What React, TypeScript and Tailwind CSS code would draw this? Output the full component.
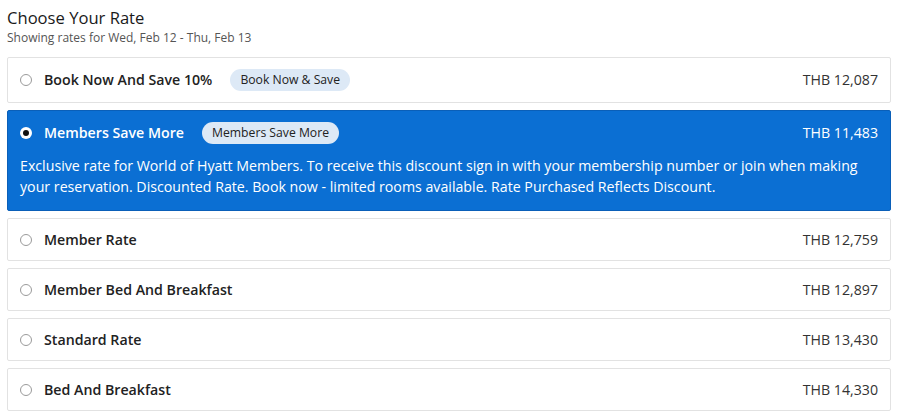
import React from "react";

type Rate = { name: string; price: string; badge?: string; selected?: boolean; desc?: string };

const rates: Rate[] = [
  { name: "Book Now And Save 10%", price: "THB 12,087", badge: "Book Now & Save" },
  {
    name: "Members Save More",
    price: "THB 11,483",
    badge: "Members Save More",
    selected: true,
    desc: "Exclusive rate for World of Hyatt Members. To receive this discount sign in with your membership number or join when making your reservation. Discounted Rate. Book now - limited rooms available. Rate Purchased Reflects Discount.",
  },
  { name: "Member Rate", price: "THB 12,759" },
  { name: "Member Bed And Breakfast", price: "THB 12,897" },
  { name: "Standard Rate", price: "THB 13,430" },
  { name: "Bed And Breakfast", price: "THB 14,330" },
];

function Radio({ selected }: { selected?: boolean }) {
  if (selected) {
    return (
      <span className="flex h-[12px] w-[12px] shrink-0 items-center justify-center rounded-full bg-white">
        <span className="h-[6px] w-[6px] rounded-full bg-[#111]" />
      </span>
    );
  }
  return <span className="h-[12px] w-[12px] shrink-0 rounded-full border border-[#9a9a9a] bg-white" />;
}

export default function App() {
  return (
    <div
      className="w-[900px] h-[420px] bg-white pl-[7px] pr-[9px] pt-[6px]"
      style={{ fontFamily: '"Open Sans", "Noto Sans", sans-serif' }}
    >
      <h1 className="text-[16.6px] leading-[24px] font-medium text-[#1a1a1a]">Choose Your Rate</h1>
      <p className="text-[12px] leading-[16px] text-[#555]">Showing rates for Wed, Feb 12 - Thu, Feb 13</p>
      <div className="mt-[11px] flex flex-col gap-[7px]">
        {rates.map((r, i) =>
          r.selected ? (
            <div
              key={i}
              className="rounded-[2px] border border-[#0a5fb8] bg-[#0b6fd3] px-[12px] pt-[11px] pb-[13px] text-white"
            >
              <div className="flex h-[22px] items-center">
                <Radio selected />
                <span className="ml-[12px] text-[14.2px] font-semibold">{r.name}</span>
                <span className="ml-[18px] rounded-full bg-[#dde9f6] px-[10px] text-[12.2px] leading-[22px] text-[#222]">
                  {r.badge}
                </span>
                <span className="ml-auto text-[14.2px] font-medium">{r.price}</span>
              </div>
              <p className="mt-[11px] text-[14.2px] leading-[21px]">{r.desc}</p>
            </div>
          ) : (
            <div
              key={i}
              className={`flex items-center rounded-[2px] border border-[#e2e2e2] bg-white px-[12px] ${
                i === 0 ? "h-[46px]" : "h-[43px]"
              }`}
            >
              <Radio />
              <span className="ml-[12px] text-[14.2px] font-semibold text-[#222]">{r.name}</span>
              {r.badge && (
                <span className="ml-[18px] rounded-full bg-[#dde9f6] px-[10px] text-[12.2px] leading-[22px] text-[#222]">
                  {r.badge}
                </span>
              )}
              <span className="ml-auto text-[14.2px] text-[#333]">{r.price}</span>
            </div>
          )
        )}
      </div>
    </div>
  );
}
